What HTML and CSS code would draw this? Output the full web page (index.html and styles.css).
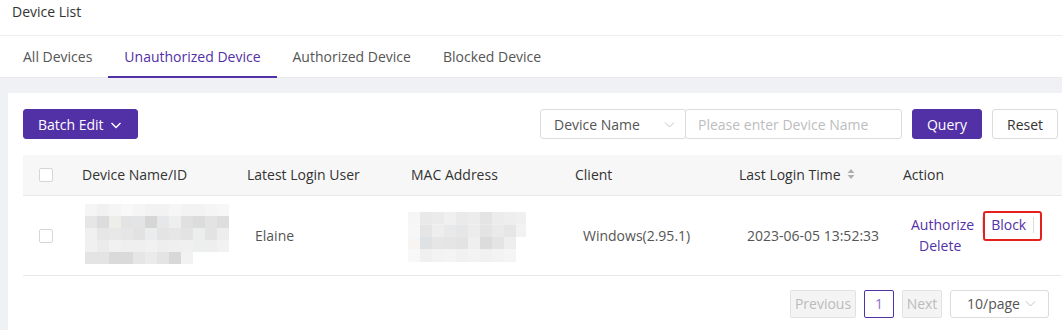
FILE: index.html
```html
<!DOCTYPE html>
<html lang="en">
<head>
<meta charset="utf-8">
<title>Device List</title>
<link rel="stylesheet" href="styles.css">
</head>
<body>
<div class="page">
  <header class="top">
    <div class="title">Device List</div>
    <nav class="tabs">
      <a class="tab">All Devices</a>
      <a class="tab active">Unauthorized Device</a>
      <a class="tab">Authorized Device</a>
      <a class="tab">Blocked Device</a>
    </nav>
  </header>
  <main class="content">
    <section class="card">
      <div class="toolbar">
        <button class="btn primary batch">Batch Edit
          <svg class="chev" width="12" height="12" viewBox="0 0 12 12"><polyline points="1.5,4 6,8.5 10.5,4" fill="none" stroke="#fff" stroke-width="1.4"/></svg>
        </button>
        <div class="search">
          <div class="select sel-field">
            <span>Device Name</span>
            <svg width="11" height="11" viewBox="0 0 11 11"><polyline points="1,3.5 5.5,8 10,3.5" fill="none" stroke="#c4c4c4" stroke-width="1"/></svg>
          </div>
          <input class="input" type="text" placeholder="Please enter Device Name">
          <button class="btn primary query">Query</button>
          <button class="btn reset">Reset</button>
        </div>
      </div>

      <table class="grid">
        <colgroup>
          <col class="c-check"><col class="c-name"><col class="c-std"><col class="c-std"><col class="c-std"><col class="c-std"><col>
        </colgroup>
        <thead>
          <tr>
            <th class="cb-cell"><span class="checkbox"></span></th>
            <th>Device Name/ID</th>
            <th>Latest Login User</th>
            <th>MAC Address</th>
            <th>Client</th>
            <th><span class="sortable">Last Login Time
              <svg width="8" height="12" viewBox="0 0 8 12"><polygon points="0.5,5 4,1 7.5,5" fill="#b0b0b0"/><polygon points="0.5,7 7.5,7 4,11" fill="#b0b0b0"/></svg></span></th>
            <th>Action</th>
          </tr>
        </thead>
        <tbody>
          <tr>
            <td class="cb-cell"><span class="checkbox"></span></td>
            <td class="blur-name">
              <svg class="blur" width="146" height="64" viewBox="0 0 146 64">
                <defs><filter id="soft" x="-5%" y="-10%" width="110%" height="120%"><feGaussianBlur stdDeviation="0.6"/></filter></defs>
                <g filter="url(#soft)">
                  <rect x="0" y="0" width="12" height="12" fill="#f5f5f5"/><rect x="12" y="0" width="12" height="12" fill="#f1f1f1"/><rect x="24" y="0" width="12" height="12" fill="#f5f5f5"/><rect x="36" y="0" width="12" height="12" fill="#f8f8f8"/><rect x="48" y="0" width="12" height="12" fill="#f5f5f5"/><rect x="60" y="0" width="12" height="12" fill="#f2f2f2"/><rect x="72" y="0" width="12" height="12" fill="#f2f2f2"/><rect x="84" y="0" width="12" height="12" fill="#f6f6f6"/><rect x="96" y="0" width="12" height="12" fill="#f3f3f3"/><rect x="108" y="0" width="12" height="12" fill="#f3f3f3"/><rect x="120" y="0" width="12" height="12" fill="#f5f5f5"/><rect x="132" y="0" width="12" height="12" fill="#f7f7f7"/>
                  <rect x="0" y="12" width="12" height="12" fill="#e6e6e6"/><rect x="12" y="12" width="12" height="12" fill="#dcdcdc"/><rect x="24" y="12" width="12" height="12" fill="#ededea"/><rect x="36" y="12" width="12" height="12" fill="#e3e3e3"/><rect x="48" y="12" width="12" height="12" fill="#e2e4e5"/><rect x="60" y="12" width="12" height="12" fill="#d6d6d6"/><rect x="72" y="12" width="12" height="12" fill="#e6e7e9"/><rect x="84" y="12" width="12" height="12" fill="#eeeeee"/><rect x="96" y="12" width="12" height="12" fill="#e0e0e0"/><rect x="108" y="12" width="12" height="12" fill="#dcdcdc"/><rect x="120" y="12" width="12" height="12" fill="#e3e3e3"/><rect x="132" y="12" width="12" height="12" fill="#dedede"/>
                  <rect x="0" y="24" width="12" height="12" fill="#f0f0f0"/><rect x="12" y="24" width="12" height="12" fill="#e6e6e6"/><rect x="24" y="24" width="12" height="12" fill="#e8e8e8"/><rect x="36" y="24" width="12" height="12" fill="#e6e6e6"/><rect x="48" y="24" width="12" height="12" fill="#e2e2e2"/><rect x="60" y="24" width="12" height="12" fill="#ebecee"/><rect x="72" y="24" width="12" height="12" fill="#e4e4e4"/><rect x="84" y="24" width="12" height="12" fill="#e6e6e6"/><rect x="96" y="24" width="12" height="12" fill="#e3e3e3"/><rect x="108" y="24" width="12" height="12" fill="#eceeee"/><rect x="120" y="24" width="12" height="12" fill="#e3e3e3"/><rect x="132" y="24" width="12" height="12" fill="#ededed"/>
                  <rect x="0" y="36" width="12" height="12" fill="#f0f0f0"/><rect x="12" y="36" width="12" height="12" fill="#ebebeb"/><rect x="24" y="36" width="12" height="12" fill="#f1f1f1"/><rect x="36" y="36" width="12" height="12" fill="#efefef"/><rect x="48" y="36" width="12" height="12" fill="#efefef"/><rect x="60" y="36" width="12" height="12" fill="#f1f1f1"/><rect x="72" y="36" width="12" height="12" fill="#eeeeee"/><rect x="84" y="36" width="12" height="12" fill="#efefef"/><rect x="96" y="36" width="12" height="12" fill="#f0f0f0"/><rect x="108" y="36" width="12" height="12" fill="#edeeee"/><rect x="120" y="36" width="12" height="12" fill="#eeeeee"/><rect x="132" y="36" width="12" height="12" fill="#f2f2f2"/>
                  <rect x="0" y="48" width="12" height="12" fill="#e4e4e4"/><rect x="12" y="48" width="12" height="12" fill="#e4e4e4"/><rect x="24" y="48" width="12" height="12" fill="#dadada"/><rect x="36" y="48" width="12" height="12" fill="#dadada"/><rect x="48" y="48" width="12" height="12" fill="#e6e6e6"/><rect x="60" y="48" width="12" height="12" fill="#ebebeb"/><rect x="72" y="48" width="12" height="12" fill="#e4e4e4"/><rect x="84" y="48" width="12" height="12" fill="#d8d8d8"/><rect x="96" y="48" width="12" height="12" fill="#f2f2f2"/>
                </g>
              </svg>
            </td>
            <td class="txt">Elaine</td>
            <td class="blur-mac">
              <svg class="blur" width="120" height="52" viewBox="0 0 120 52">
                <g filter="url(#soft)">
                  <rect x="0" y="0" width="12" height="12.5" fill="#f6f6f6"/><rect x="12" y="0" width="12" height="12.5" fill="#e9e9e9"/><rect x="24" y="0" width="12" height="12.5" fill="#ebebeb"/><rect x="36" y="0" width="12" height="12.5" fill="#f0f0f0"/><rect x="48" y="0" width="12" height="12.5" fill="#eaeaea"/><rect x="60" y="0" width="12" height="12.5" fill="#ececec"/><rect x="72" y="0" width="12" height="12.5" fill="#e4e4e4"/><rect x="84" y="0" width="12" height="12.5" fill="#ececec"/><rect x="96" y="0" width="12" height="12.5" fill="#eeeeee"/><rect x="108" y="0" width="10" height="12.5" fill="#f0f0f0"/>
                  <rect x="0" y="12.5" width="12" height="12.5" fill="#f7f7f7"/><rect x="12" y="12.5" width="12" height="12.5" fill="#e5e5e5"/><rect x="24" y="12.5" width="12" height="12.5" fill="#eeeeee"/><rect x="36" y="12.5" width="12" height="12.5" fill="#e9e9e9"/><rect x="48" y="12.5" width="12" height="12.5" fill="#e5e6e7"/><rect x="60" y="12.5" width="12" height="12.5" fill="#ececec"/><rect x="72" y="12.5" width="12" height="12.5" fill="#e4e4e4"/><rect x="84" y="12.5" width="12" height="12.5" fill="#eaeaea"/><rect x="96" y="12.5" width="12" height="12.5" fill="#e6e6e6"/><rect x="108" y="12.5" width="10" height="12.5" fill="#f2f2f2"/>
                  <rect x="0" y="25" width="12" height="12.5" fill="#f7f5f3"/><rect x="12" y="25" width="12" height="12.5" fill="#dee2e5"/><rect x="24" y="25" width="12" height="12.5" fill="#e6e6e6"/><rect x="36" y="25" width="12" height="12.5" fill="#e5e5e5"/><rect x="48" y="25" width="12" height="12.5" fill="#e3e3e3"/><rect x="60" y="25" width="12" height="12.5" fill="#efefef"/><rect x="72" y="25" width="12" height="12.5" fill="#dcdcdc"/><rect x="84" y="25" width="12" height="12.5" fill="#e4e4e4"/><rect x="96" y="25" width="12" height="12.5" fill="#eeeeee"/>
                  <rect x="0" y="37.5" width="12" height="12.5" fill="#f8f8f8"/><rect x="12" y="37.5" width="12" height="12.5" fill="#f0f0f0"/><rect x="24" y="37.5" width="12" height="12.5" fill="#f3f3f3"/><rect x="36" y="37.5" width="12" height="12.5" fill="#f4f4f4"/><rect x="48" y="37.5" width="12" height="12.5" fill="#f1f1f1"/><rect x="60" y="37.5" width="12" height="12.5" fill="#f3f3f3"/><rect x="72" y="37.5" width="12" height="12.5" fill="#f1f1f1"/><rect x="84" y="37.5" width="12" height="12.5" fill="#f3f3f3"/><rect x="96" y="37.5" width="12" height="12.5" fill="#f5f5f5"/>
                </g>
              </svg>
            </td>
            <td class="txt">Windows(2.95.1)</td>
            <td class="txt">2023-06-05 13:52:33</td>
            <td class="actions">
              <div class="act-line">
                <a class="link">Authorize</a><span class="divider"></span><a class="link">Block</a><span class="divider"></span>
                <span class="highlight"></span>
              </div>
              <div class="act-line second"><a class="link">Delete</a></div>
            </td>
          </tr>
        </tbody>
      </table>

      <div class="pager">
        <button class="pg disabled prev">Previous</button>
        <button class="pg current">1</button>
        <button class="pg disabled next">Next</button>
        <div class="select page-size">
          <span>10/page</span>
          <svg width="11" height="11" viewBox="0 0 11 11"><polyline points="1,3.5 5.5,8 10,3.5" fill="none" stroke="#c4c4c4" stroke-width="1"/></svg>
        </div>
      </div>
    </section>
  </main>
</div>
</body>
</html>
```

FILE: styles.css
```css
* { box-sizing: border-box; }
html, body { margin: 0; padding: 0; }
body {
  font-family: "Open Sans", "Noto Sans", "Liberation Sans", sans-serif;
  font-size: 14px;
  color: #333;
  background: #f0f1f5;
  width: 1062px;
  height: 330px;
  overflow: hidden;
}
.page { display: flex; flex-direction: column; min-height: 330px; }

.top { background: #fff; }
.title {
  height: 36px;
  padding: 0 12px;
  line-height: 24px;
  color: #333;
  border-bottom: 1px solid #eceef2;
}
.tabs {
  display: flex;
  padding-left: 7px;
  height: 42px;
  border-bottom: 1px solid #e9eaee;
}
.tab {
  display: flex;
  align-items: center;
  padding: 0 16px;
  color: #555;
  border-bottom: 2px solid transparent;
  margin-bottom: -1px;
}
.tab.active { color: #5230a6; border-bottom-color: #5230a6; }

.content { flex: 1; padding: 15px 0 0 8px; }
.card {
  background: #fff;
  padding: 16px 0 20px 15px;
  min-height: 240px;
}

.toolbar {
  display: flex;
  justify-content: space-between;
  align-items: center;
  margin-right: 4px;
  height: 30px;
}
.btn {
  font-family: inherit;
  font-size: 14px;
  height: 30px;
  border-radius: 3px;
  border: 1px solid #dcdcdc;
  background: #fff;
  color: #333;
  padding: 0 14px;
  display: inline-flex;
  align-items: center;
  justify-content: center;
  cursor: pointer;
}
.btn.primary { background: #5230a6; border-color: #5230a6; color: #fff; }
.batch { width: 115px; padding: 0 0 0 14px; justify-content: flex-start; gap: 6px; }
.chev { display: block; margin-top: 1px; }
.search { display: flex; align-items: center; }
.select {
  display: flex;
  align-items: center;
  justify-content: space-between;
  height: 30px;
  border: 1px solid #dcdcdc;
  border-radius: 3px;
  background: #fff;
  color: #555;
}
.sel-field { width: 146px; padding: 0 10px 0 13px; }
.input {
  font-family: inherit;
  font-size: 14px;
  width: 217px;
  height: 30px;
  border: 1px solid #dcdcdc;
  border-radius: 3px;
  padding: 0 12px;
  margin-left: -1px;
  color: #333;
  outline: none;
}
.input::placeholder { color: #bdbdbd; }
.query { width: 70px; margin-left: 10px; padding: 0; }
.reset { width: 66px; margin-left: 10px; padding: 0; }

.grid {
  width: 100%;
  table-layout: fixed;
  border-collapse: collapse;
  margin-top: 16px;
}
.c-check { width: 43px; }
.c-name { width: 165px; }
.c-std { width: 164px; }
.grid th {
  height: 40px;
  background: #f7f7f7;
  font-weight: normal;
  text-align: left;
  padding: 0 0 0 16px;
  color: #333;
  border-bottom: 1px solid #e8e8e8;
  white-space: nowrap;
}
.grid td {
  height: 80px;
  padding: 0 0 0 24px;
  color: #555;
  border-bottom: 1px solid #e8e8e8;
  white-space: nowrap;
  vertical-align: middle;
}
.grid .cb-cell { padding-left: 16px; }
.checkbox {
  display: block;
  width: 14px;
  height: 14px;
  border: 1px solid #d6d6d6;
  border-radius: 2px;
  background: #fff;
}
.grid td.cb-cell .checkbox { margin-top: 2px; }
.sortable { display: inline-flex; align-items: center; gap: 6px; }
.sortable svg { display: block; margin-top: -2px; }

.grid td.blur-name { padding-left: 19px; }
.grid td.blur-mac { padding-left: 13px; }
.blur { display: block; }
.blur-name .blur { margin-top: 2px; }
.blur-mac .blur { margin-top: 6px; }

.actions { position: relative; }
.grid td.actions { padding-left: 24px; }
.act-line { display: flex; align-items: center; line-height: 21px; position: relative; }
.act-line.second { padding-left: 8px; }
.link { color: #5232a8; cursor: pointer; }
.divider {
  display: inline-block;
  width: 1px;
  height: 16px;
  background: #dcdcdc;
  margin: 0 8px 0 8px;
}
.divider + .link + .divider { margin-left: 7px; }
.highlight {
  position: absolute;
  left: 72px;
  top: -3px;
  width: 59px;
  height: 30px;
  border: 2px solid #e5201c;
  border-radius: 3px;
  pointer-events: none;
}

.pager {
  display: flex;
  justify-content: flex-end;
  gap: 8px;
  margin-top: 14px;
  margin-right: 13px;
}
.pg {
  font-family: inherit;
  font-size: 14px;
  height: 28px;
  padding: 0;
  border: 1px solid #dcdcdc;
  border-radius: 2px;
  background: #fff;
  color: #555;
}
.pg.disabled { background: #f4f4f4; color: #bbb; border-color: #e2e2e2; }
.prev { width: 66px; }
.next { width: 40px; }
.pg.current { width: 30px; border-color: #5230a6; color: #8a6fc9; }
.page-size { width: 99px; height: 28px; padding: 0 12px 0 16px; }
```
